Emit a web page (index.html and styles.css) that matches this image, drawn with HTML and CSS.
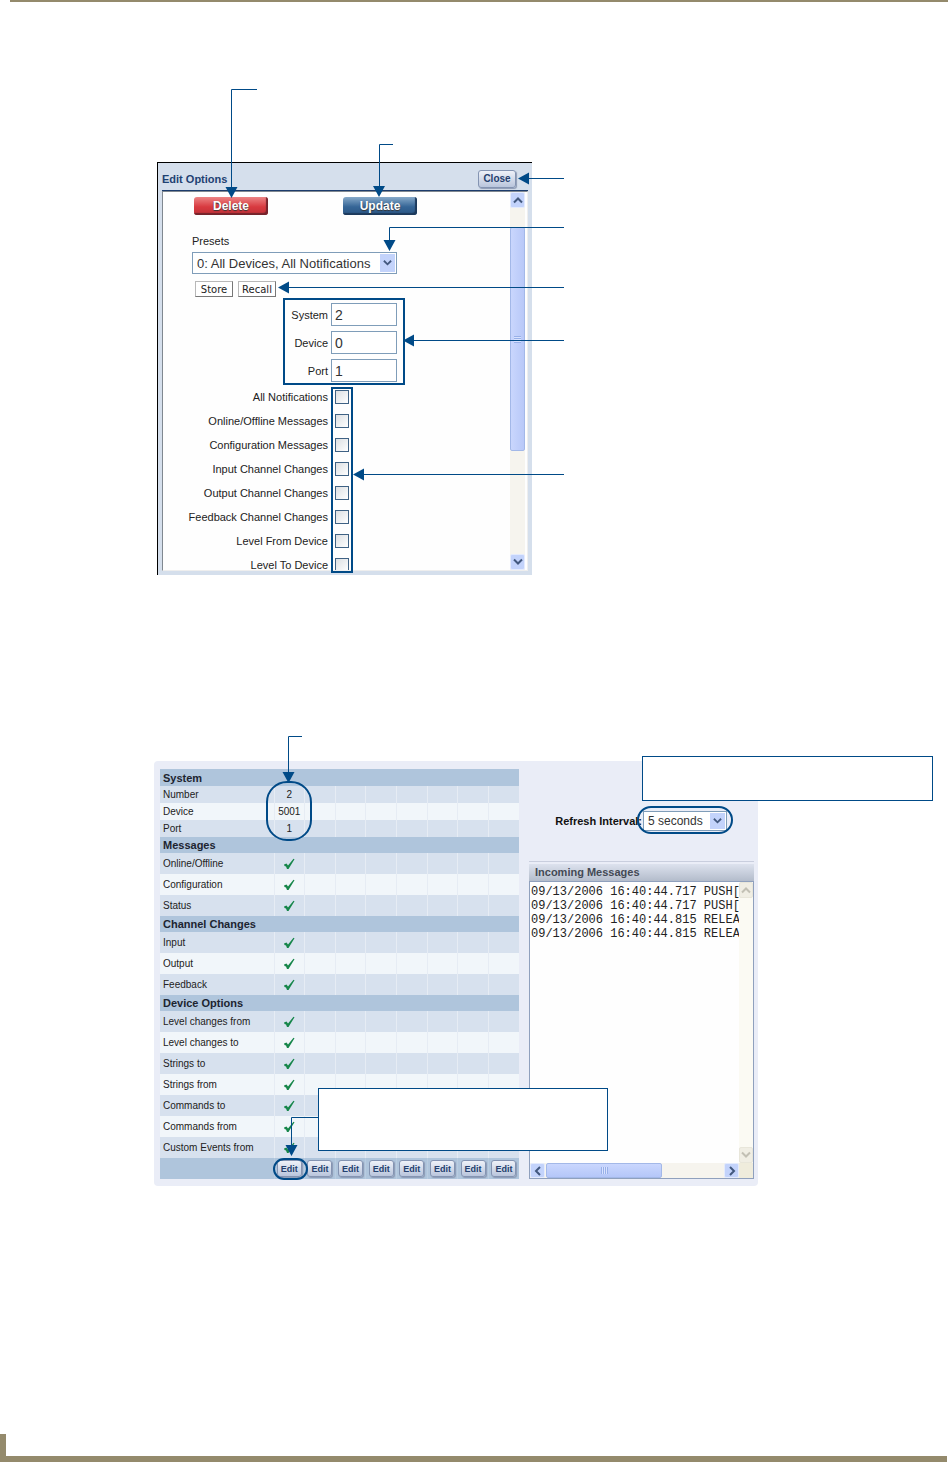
FILE: index.html
```
<!DOCTYPE html>
<html lang="en">
<head>
  <meta charset="UTF-8">
  <meta name="viewport" content="width=device-width, initial-scale=1.0">
  <title>Device Notifications</title>
  <link rel="stylesheet" href="styles.css">
</head>
<body>
  <svg class="sprite" aria-hidden="true">
    <symbol id="down" viewBox="0 0 10 8"><path d="M1 1.5L5 5.5L9 1.5" /></symbol>
    <symbol id="up" viewBox="0 0 10 8"><path d="M1 6.5L5 2.5L9 6.5" /></symbol>
    <symbol id="left" viewBox="0 0 8 10"><path d="M6 1L2 5L6 9" /></symbol>
    <symbol id="right" viewBox="0 0 8 10"><path d="M2 1L6 5L2 9" /></symbol>
    <symbol id="check" viewBox="0 0 12 12"><path d="M1 6.500L3.500 5.500L5 7.500L10.500 .8L11.500 1.200L5.500 11H4L3 8.500L1.500 8Z" /></symbol>
  </svg>

  <header class="page-top"></header>

  <main>
    <figure class="options-figure">
      <form class="dialog">
        <div class="dialog-head">
          <h2>Edit Options</h2>
          <button type="button" class="soft close">Close</button>
        </div>
        <div class="frame">
          <div class="frame-body">
            <div class="actions">
              <button type="button" class="pill red">Delete</button>
              <button type="button" class="pill blue">Update</button>
            </div>
            <label class="presets-label" for="presets">Presets</label>
            <div class="select">
              <select id="presets">
                <option>0: All Devices, All Notifications</option>
              </select>
              <svg class="arrow"><use href="#down" /></svg>
            </div>
            <div class="memory">
              <button type="button">Store</button>
              <button type="button">Recall</button>
            </div>
            <div class="fields">
              <label for="system">System</label><input type="text" id="system" value="2">
              <label for="device">Device</label><input type="text" id="device" value="0">
              <label for="port">Port</label><input type="text" id="port" value="1">
            </div>
            <div class="checks">
              <label for="all">All Notifications</label><input type="checkbox" id="all">
              <label for="online">Online/Offline Messages</label><input type="checkbox" id="online">
              <label for="config">Configuration Messages</label><input type="checkbox" id="config">
              <label for="input">Input Channel Changes</label><input type="checkbox" id="input">
              <label for="output">Output Channel Changes</label><input type="checkbox" id="output">
              <label for="feedback">Feedback Channel Changes</label><input type="checkbox" id="feedback">
              <label for="from">Level From Device</label><input type="checkbox" id="from">
              <label for="to">Level To Device</label><input type="checkbox" id="to">
            </div>
          </div>
          <div class="scroll-y">
            <span class="scroll-button"><svg><use href="#up" /></svg></span>
            <span class="thumb"></span>
            <span class="scroll-button last"><svg><use href="#down" /></svg></span>
          </div>
        </div>
      </form>

      <svg class="callouts" viewBox="157 80 420 500" width="420" height="500" aria-hidden="true">
        <path class="line" d="M257 89.500H231.500V190M393 144.500H379.500V190M564 178.500H525M564 227.500H389.500V244M564 287.500H285M564 340.500H410M564 474.500H360" />
        <path class="head" d="M225.500 187H237.500L231.500 198ZM373 186H385L379 197ZM529 172.500V184.500L518 178.500ZM383.500 240H395.500L389.500 251ZM289 281.500V293.500L278 287.500ZM414 334.500V346.500L403 340.500ZM364 468.500V480.500L353 474.500Z" />
        <rect class="ring" x="284" y="299" width="120" height="85" />
        <rect class="ring" x="332" y="388" width="20" height="184" />
      </svg>
    </figure>

    <figure class="monitor-figure">
      <div class="monitor">
        <table>
          <colgroup>
            <col class="name-col">
            <col span="8">
          </colgroup>
          <tbody class="short">
            <tr class="first"><th colspan="9">System</th></tr>
            <tr><td>Number</td><td>2</td><td></td><td></td><td></td><td></td><td></td><td></td><td></td></tr>
            <tr><td>Device</td><td>5001</td><td></td><td></td><td></td><td></td><td></td><td></td><td></td></tr>
            <tr><td>Port</td><td>1</td><td></td><td></td><td></td><td></td><td></td><td></td><td></td></tr>
          </tbody>
          <tbody>
            <tr><th colspan="9">Messages</th></tr>
            <tr><td>Online/Offline</td><td><svg class="check"><use href="#check" /></svg></td><td></td><td></td><td></td><td></td><td></td><td></td><td></td></tr>
            <tr><td>Configuration</td><td><svg class="check"><use href="#check" /></svg></td><td></td><td></td><td></td><td></td><td></td><td></td><td></td></tr>
            <tr><td>Status</td><td><svg class="check"><use href="#check" /></svg></td><td></td><td></td><td></td><td></td><td></td><td></td><td></td></tr>
          </tbody>
          <tbody>
            <tr><th colspan="9">Channel Changes</th></tr>
            <tr><td>Input</td><td><svg class="check"><use href="#check" /></svg></td><td></td><td></td><td></td><td></td><td></td><td></td><td></td></tr>
            <tr><td>Output</td><td><svg class="check"><use href="#check" /></svg></td><td></td><td></td><td></td><td></td><td></td><td></td><td></td></tr>
            <tr><td>Feedback</td><td><svg class="check"><use href="#check" /></svg></td><td></td><td></td><td></td><td></td><td></td><td></td><td></td></tr>
          </tbody>
          <tbody>
            <tr><th colspan="9">Device Options</th></tr>
            <tr><td>Level changes from</td><td><svg class="check"><use href="#check" /></svg></td><td></td><td></td><td></td><td></td><td></td><td></td><td></td></tr>
            <tr><td>Level changes to</td><td><svg class="check"><use href="#check" /></svg></td><td></td><td></td><td></td><td></td><td></td><td></td><td></td></tr>
            <tr><td>Strings to</td><td><svg class="check"><use href="#check" /></svg></td><td></td><td></td><td></td><td></td><td></td><td></td><td></td></tr>
            <tr><td>Strings from</td><td><svg class="check"><use href="#check" /></svg></td><td></td><td></td><td></td><td></td><td></td><td></td><td></td></tr>
            <tr><td>Commands to</td><td><svg class="check"><use href="#check" /></svg></td><td></td><td></td><td></td><td></td><td></td><td></td><td></td></tr>
            <tr><td>Commands from</td><td><svg class="check"><use href="#check" /></svg></td><td></td><td></td><td></td><td></td><td></td><td></td><td></td></tr>
            <tr><td>Custom Events from</td><td><svg class="check"><use href="#check" /></svg></td><td></td><td></td><td></td><td></td><td></td><td></td><td></td></tr>
          </tbody>
          <tfoot>
            <tr>
              <td></td>
              <td><button type="button" class="soft">Edit</button></td>
              <td><button type="button" class="soft">Edit</button></td>
              <td><button type="button" class="soft">Edit</button></td>
              <td><button type="button" class="soft">Edit</button></td>
              <td><button type="button" class="soft">Edit</button></td>
              <td><button type="button" class="soft">Edit</button></td>
              <td><button type="button" class="soft">Edit</button></td>
              <td><button type="button" class="soft">Edit</button></td>
            </tr>
          </tfoot>
        </table>

        <section class="side">
          <div class="refresh">
            <label for="interval">Refresh Interval:</label>
            <div class="select small">
              <select id="interval">
                <option>5 seconds</option>
              </select>
              <svg class="arrow"><use href="#down" /></svg>
            </div>
          </div>
          <label class="log-title" for="log">Incoming Messages</label>
          <div class="log">
            <textarea id="log" wrap="off" readonly>09/13/2006 16:40:44.717 PUSH[
09/13/2006 16:40:44.717 PUSH[
09/13/2006 16:40:44.815 RELEA
09/13/2006 16:40:44.815 RELEA</textarea>
            <div class="scroll-y off">
              <span class="scroll-button"><svg><use href="#up" /></svg></span>
              <span class="scroll-button last"><svg><use href="#down" /></svg></span>
            </div>
            <div class="scroll-x">
              <span class="scroll-button"><svg><use href="#left" /></svg></span>
              <span class="thumb"></span>
              <span class="scroll-button last"><svg><use href="#right" /></svg></span>
            </div>
            <div class="corner"></div>
          </div>
        </section>
      </div>

      <svg class="callouts" viewBox="154 730 784 460" width="784" height="460" aria-hidden="true">
        <rect class="box" x="642.500" y="756.500" width="290" height="44" />
        <rect class="box" x="318.500" y="1088.500" width="289" height="62" />
        <path class="line" d="M302 736.500H288.500V775M318 1117.500H291.500V1148" />
        <path class="head" d="M282.500 772H294.500L288.500 783ZM285.500 1145H297.500L291.500 1156Z" />
        <rect class="ring" x="267" y="782" width="44" height="58" rx="20" />
        <rect class="ring" x="638" y="807" width="94" height="26" rx="13" />
        <rect class="ring" x="274" y="1159" width="33" height="20" rx="10" />
      </svg>
    </figure>
  </main>

  <footer class="page-bottom"></footer>
</body>
</html>
```
FILE: styles.css
```
* {
  margin: 0;
  padding: 0;
  box-sizing: border-box;
}

body {
  display: flex;
  flex-direction: column;
  min-height: 100vh;
  background: #fff;
  color: #222;
  font-family: "Liberation Sans", Arial, sans-serif;
  font-size: 11px;
}

button, input, select, textarea {
  font-family: inherit;
  border-radius: 0;
}

.sprite {
  position: absolute;
  width: 0;
  height: 0;
}

.page-top {
  height: 2px;
  margin-left: 10px;
  background: #948a6c;
}

.page-bottom {
  height: 28px;
  margin: auto 1px 0 0;
  border-left: 6px solid #948a6c;
  border-bottom: 6px solid #948a6c;
}

main {
  padding: 78px 10px 0 154px;
}

/* callouts */

.callouts {
  position: absolute;
  top: 0;
  left: 0;
  pointer-events: none;
}

.line {
  fill: none;
  stroke: #004a87;
}

.head {
  fill: #004a87;
}

.ring {
  fill: none;
  stroke: #004a87;
  stroke-width: 2;
}

.box {
  fill: #fff;
  stroke: #004a87;
}

/* shared controls */

.soft {
  border: 1px solid #8494b2;
  border-radius: 3px;
  background: linear-gradient(#eef1f8, #b9c5dc);
  box-shadow: 1px 1px 1px #8c9ab4;
  color: #24406e;
  font-size: 9px;
  font-weight: bold;
}

.select {
  position: relative;
  width: 205px;
}

.select select {
  display: block;
  width: 100%;
  height: 22px;
  padding: 0 4px;
  appearance: none;
  border: 1px solid #7f9db9;
  background: #fff;
  color: #333;
  font-size: 13px;
}

.arrow {
  position: absolute;
  top: 2px;
  right: 2px;
  bottom: 2px;
  width: 15px;
  height: calc(100% - 4px);
  padding: 3px;
  background: #c3d3fb;
  fill: none;
  stroke: #42587e;
  stroke-width: 2;
  pointer-events: none;
}

.select.small {
  width: 84px;
}

.small select {
  height: 20px;
  font-size: 12px;
}

.scroll-y, .scroll-x {
  display: flex;
  background: #f6f4ee;
}

.scroll-y {
  flex-direction: column;
  width: 15px;
}

.scroll-button {
  display: flex;
  align-items: center;
  justify-content: center;
  flex: none;
  width: 15px;
  height: 16px;
  border: 1px solid #e4ebfd;
  border-radius: 2px;
  background: #c3d3fb;
}

.scroll-button svg {
  width: 10px;
  height: 10px;
  fill: none;
  stroke: #42587e;
  stroke-width: 2;
}

.last {
  margin-top: auto;
}

.thumb {
  border: 1px solid #a3b8e8;
  border-radius: 2px;
  background: #c4d2fc;
}

/* edit options */

.options-figure {
  position: relative;
  padding: 82px 0 0;
  margin-left: 3px;
}

.dialog {
  max-width: 375px;
  padding: 0 4px 4px;
  border-top: 1px solid #000;
  border-left: 1px solid #000;
  background: #d5dfec;
}

.dialog-head {
  display: flex;
  align-items: center;
  justify-content: space-between;
  height: 28px;
  padding: 4px 12px 0 0;
  border-bottom: 1px solid #1c3c6c;
}

.dialog-head h2 {
  color: #1f4272;
  font-size: 11px;
}

.close {
  width: 38px;
  height: 18px;
  font-size: 10px;
}

.frame {
  display: flex;
  height: 380px;
  border: 1px solid #808890;
  border-right-color: #eee;
  border-bottom-color: #eee;
  background: #fefefe;
  overflow: hidden;
}

.frame-body {
  flex: 1;
  padding: 5px 0 0 29px;
}

.frame .scroll-y {
  margin-right: 2px;
}

.frame .thumb {
  display: flex;
  height: 224px;
  margin-top: 19px;
  background: linear-gradient(90deg, #c9d6fd, #b8c8f8);
}

.thumb::after {
  content: "";
  width: 7px;
  height: 7px;
  margin: auto;
  background: repeating-linear-gradient(#98b0e8 0 1px, #d8e2ff 1px 2px);
}

.actions {
  display: flex;
  gap: 75px;
  padding-left: 2px;
}

.pill {
  width: 74px;
  height: 18px;
  border: 0;
  border-radius: 3px;
  color: #fff;
  font-size: 12px;
  font-weight: bold;
  text-shadow: 0 1px 1px #333;
}

.red {
  background: linear-gradient(#ec8484, #d83a40 55%, #bf3037);
  box-shadow: inset -2px -2px 1px #74242c;
}

.blue {
  background: linear-gradient(#86a9c9, #356596 55%, #2b5684);
  box-shadow: inset -2px -2px 1px #1d3a5c;
}

.presets-label {
  display: block;
  margin: 19px 0 4px;
  line-height: 14px;
}

.memory {
  display: flex;
  gap: 5px;
  margin: 7px 0 6px 3px;
}

.memory button {
  width: 38px;
  height: 16px;
  border: 1px solid #b8b8b8;
  border-right-color: #777;
  border-bottom-color: #777;
  background: #fff;
  color: #222;
  font-family: "DejaVu Sans", Verdana, sans-serif;
  font-size: 10px;
}

.fields, .checks {
  display: grid;
  grid-template-columns: 140px auto;
  justify-content: start;
  align-items: center;
  margin-left: -4px;
  text-align: right;
  white-space: nowrap;
}

.fields {
  gap: 5px 3px;
}

.fields input {
  width: 66px;
  height: 23px;
  padding: 0 3px;
  border: 1px solid #7f9db9;
  background: #fff;
  color: #333;
  font-size: 14px;
}

.checks {
  grid-auto-rows: 24px;
  gap: 0 7px;
  margin-top: 3px;
}

.checks input {
  width: 14px;
  height: 14px;
  appearance: none;
  border: 1px solid #3f6284;
  background: linear-gradient(135deg, #dcdfe2, #fff);
}

/* monitor */

.monitor-figure {
  position: relative;
  padding-top: 31px;
  margin-top: 155px;
}

.monitor {
  display: grid;
  grid-template-columns: 359px 1fr;
  gap: 10px;
  max-width: 604px;
  padding: 8px 4px 7px 6px;
  border-radius: 4px;
  background: #eaedf7;
}

table {
  width: 100%;
  table-layout: fixed;
  border-collapse: collapse;
}

.name-col {
  width: 114px;
}

tr {
  height: 21px;
  background: #d7e1ee;
}

tbody tr:nth-child(odd) {
  background: #f1f6fa;
}

tbody tr:first-child {
  height: 16px;
  background: #afc5dc;
}

.short tr, .short .first {
  height: 17px;
}

th {
  padding-left: 3px;
  color: #1c2430;
  font-size: 11px;
  line-height: 14px;
  text-align: left;
}

td {
  border-left: 1px solid #e6ecf4;
  font-size: 10px;
  line-height: 12px;
  text-align: center;
}

td:first-child {
  padding-left: 3px;
  border-left: 0;
  text-align: left;
}

.check {
  display: block;
  width: 12px;
  height: 12px;
  margin: auto;
  fill: #16864a;
}

tfoot tr {
  background: #afc5dc;
}

tfoot td {
  border-color: #b9cce0;
}

tfoot .soft {
  display: block;
  width: 25px;
  height: 17px;
  margin: auto;
}

.side {
  display: flex;
  flex-direction: column;
  min-width: 0;
}

.refresh {
  display: flex;
  align-items: center;
  justify-content: flex-end;
  gap: 1px;
  height: 93px;
  padding: 11px 27px 0 0;
  border-bottom: 1px solid #c9cede;
  font-weight: bold;
  color: #111;
}

.log-title {
  height: 17px;
  margin-top: 2px;
  padding-left: 6px;
  background: linear-gradient(#dde2ee, #b3bccb);
  color: #444a55;
  font-size: 11px;
  font-weight: bold;
  line-height: 17px;
}

.log {
  display: grid;
  grid-template-columns: 1fr 14px;
  grid-template-rows: 1fr 15px;
  flex: 1;
  border: 1px solid #8fa0bd;
  background: #fff;
}

.log textarea {
  width: 100%;
  height: 100%;
  padding: 3px 0 0 1px;
  border: 0;
  background: #fefefe;
  color: #222;
  font-family: "Liberation Mono", "Courier New", monospace;
  font-size: 12px;
  line-height: 14px;
  overflow: hidden;
  resize: none;
}

.off {
  width: 14px;
  background: #fbfaf3;
}

.off .scroll-button {
  width: 14px;
  border-color: #e8e6da;
  background: #f0eee4;
}

.off .scroll-button svg {
  stroke: #c2c0b4;
}

.scroll-x .scroll-button {
  height: 15px;
  margin-top: 0;
}

.scroll-x .last {
  margin-left: auto;
}

.scroll-x .thumb {
  display: flex;
  width: 116px;
  margin-left: 1px;
  background: linear-gradient(#cad7fe, #b4c6f8);
}

.scroll-x .thumb::after {
  background: repeating-linear-gradient(90deg, #98b0e8 0 1px, #d8e2ff 1px 2px);
}

.corner {
  background: #efecdc;
}
```
